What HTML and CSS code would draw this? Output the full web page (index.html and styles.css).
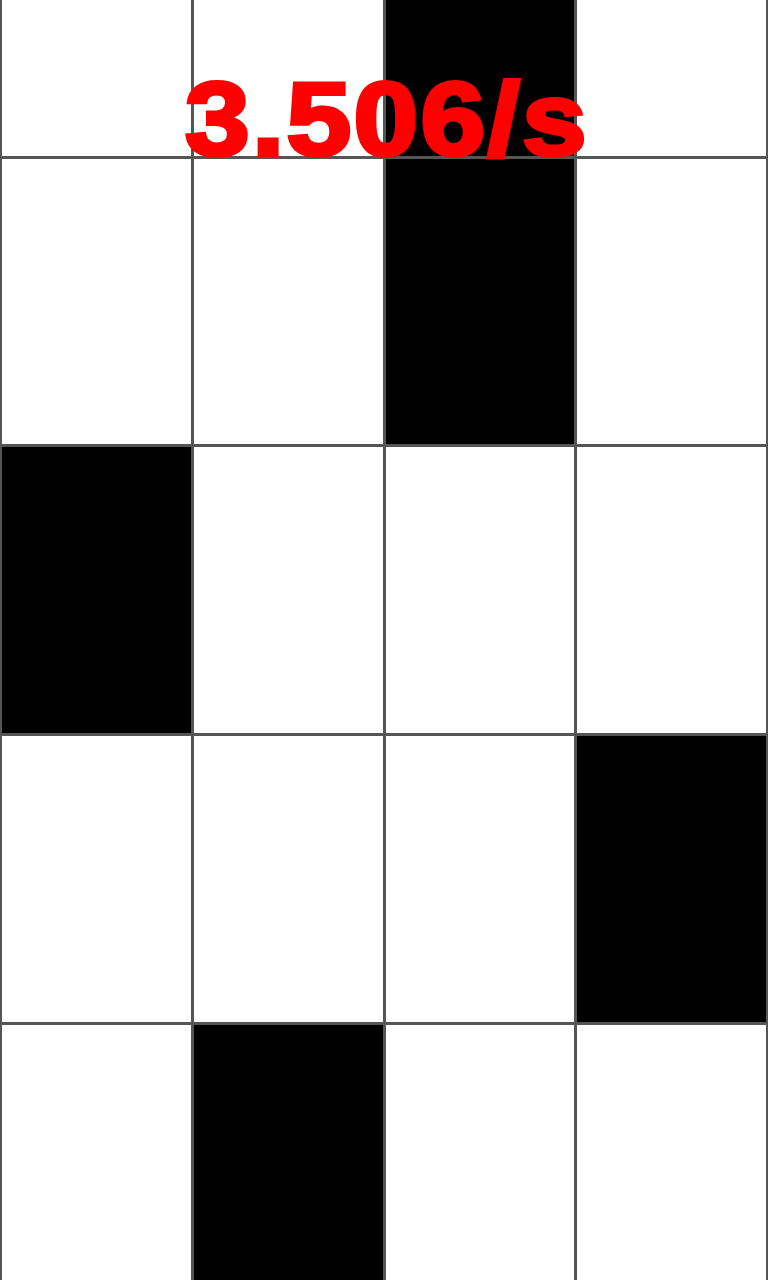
FILE: index.html
```html
<!DOCTYPE html>
<html>
<head>
<meta charset="utf-8">
<link rel="stylesheet" href="styles.css">
</head>
<body>
<div class="stage">
  <div class="board">
    <div class="cell"></div><div class="cell"></div><div class="cell black"></div><div class="cell"></div>
    <div class="cell"></div><div class="cell"></div><div class="cell black"></div><div class="cell"></div>
    <div class="cell black"></div><div class="cell"></div><div class="cell"></div><div class="cell"></div>
    <div class="cell"></div><div class="cell"></div><div class="cell"></div><div class="cell black"></div>
    <div class="cell"></div><div class="cell black"></div><div class="cell"></div><div class="cell"></div>
  </div>
  <div class="speed">3.506/s</div>
</div>
</body>
</html>
```
FILE: styles.css
```css
html, body {
  margin: 0;
  padding: 0;
  width: 768px;
  height: 1280px;
  overflow: hidden;
  background: #fff;
}
.stage {
  position: relative;
  width: 768px;
  height: 1280px;
  overflow: hidden;
}
.board {
  display: grid;
  grid-template-columns: repeat(4, 1fr);
  grid-auto-rows: 285.67px;
  gap: 3px;
  padding: 0 2px;
  margin-top: -130px;
  background: #555;
}
.cell {
  background: #fff;
}
.cell.black {
  background: #000;
}
.speed {
  position: absolute;
  top: 68px;
  left: 0;
  right: 0;
  text-align: center;
  font-family: "Liberation Sans", Arial, sans-serif;
  font-weight: bold;
  font-size: 103px;
  line-height: 1;
  letter-spacing: 2px;
  color: #ff0000;
  -webkit-text-stroke: 4px #ff0000;
  transform: translateX(3px) scaleX(1.13);
  transform-origin: 384px 0;
}
```
